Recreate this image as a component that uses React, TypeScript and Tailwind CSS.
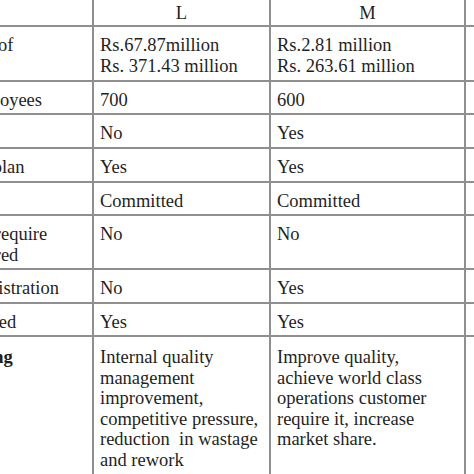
import React from "react";

type Row = {
  label: React.ReactNode;
  l: React.ReactNode;
  m: React.ReactNode;
  bold?: boolean;
  pad?: string;
};

const rows: Row[] = [
  {
    label: (
      <>
        Total value of
        <br />
        sales
      </>
    ),
    l: (
      <>
        Rs.67.87million
        <br />
        Rs. 371.43 million
      </>
    ),
    m: (
      <>
        Rs.2.81 million
        <br />
        Rs. 263.61 million
      </>
    ),
  },
  { label: "No. of employees", l: "700", m: "600" },
  { label: "Export", l: "No", m: "Yes" },
  { label: "Marketing plan", l: "Yes", m: "Yes" },
  { label: "Top", l: "Committed", m: "Committed" },
  {
    label: (
      <>
        Customers require
        <br />
        ISO registered
      </>
    ),
    l: "No",
    m: "No",
  },
  { label: "Plan for registration", l: "No", m: "Yes" },
  { label: "Audit planned", l: "Yes", m: "Yes" },
  {
    label: (
      <>
        Encouraging
        <br />
        factors
      </>
    ),
    bold: true,
    pad: " pt-[10px]",
    l: (
      <>
        Internal quality
        <br />
        management
        <br />
        improvement,
        <br />
        competitive pressure,
        <br />
        {"reduction\u00a0 in wastage"}
        <br />
        and rework
      </>
    ),
    m: (
      <>
        Improve quality,
        <br />
        achieve world class
        <br />
        operations customer
        <br />
        require it, increase
        <br />
        market share.
      </>
    ),
  },
];

export default function App() {
  return (
    <div className="w-[474px] h-[474px] overflow-hidden bg-white">
      <div
        className="ml-[-97px] mt-[-7px] w-max grid grid-cols-[187px_175px_193px_120px] grid-rows-[30px_53px_31px_32px_32px_31px_52px_32px_31px_150px] gap-[2px] p-[2px] bg-[#8f8f8f] text-[#1f1f1f] text-[18.5px] leading-[20.5px]"
        style={{ fontFamily: '"Liberation Serif", "Times New Roman", serif' }}
      >
        {/* header */}
        <div className="bg-white" />
        <div className="bg-white pt-[8px] text-center">L</div>
        <div className="bg-white pt-[8px] text-center">M</div>
        <div className="bg-white" />

        {rows.map((r, i) => {
          const cell = "bg-white pl-[6px] whitespace-nowrap" + (r.pad ?? " pt-[8px]");
          return (
            <React.Fragment key={i}>
              <div className={cell + (r.bold ? " font-bold" : "")}>{r.label}</div>
              <div className={cell}>{r.l}</div>
              <div className={cell}>{r.m}</div>
              <div className="bg-white" />
            </React.Fragment>
          );
        })}
      </div>
    </div>
  );
}
